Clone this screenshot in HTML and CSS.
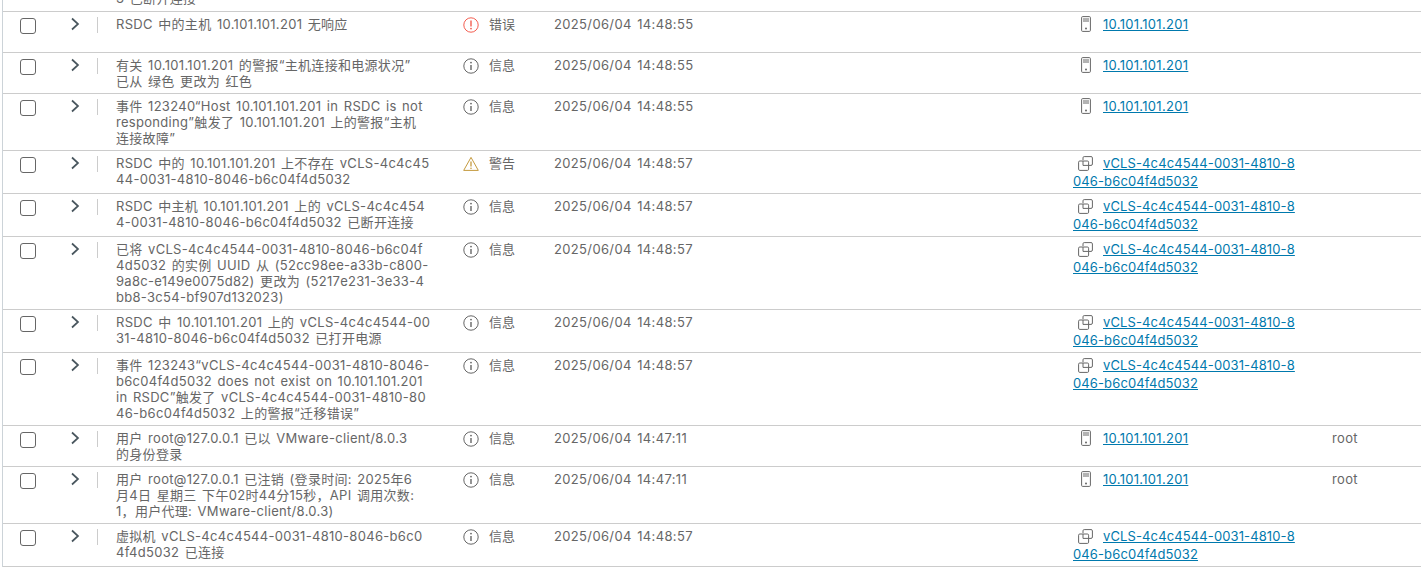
FILE: index.html
```html
<!DOCTYPE html>
<html>
<head>
    <meta charset="utf-8">
    <link rel="stylesheet" href="styles.css">
</head>
<body>
<svg class="sprites" width="0" height="0">
    <symbol id="chevron" viewBox="0 0 10 14"><path d="M2 1.5 L8 7 L2 12.5" fill="none" stroke="currentColor" stroke-width="1.7"/></symbol>
    <symbol id="error" viewBox="0 0 16 16"><circle cx="8" cy="8" r="7.2" fill="none" stroke="currentColor"/><path d="M8 3.6 V9.4" stroke="currentColor" stroke-width="1.4"/><circle cx="8" cy="11.6" r="0.9" fill="currentColor"/></symbol>
    <symbol id="info" viewBox="0 0 16 16"><circle cx="8" cy="8" r="7.2" fill="none" stroke="currentColor"/><path d="M8 7 V12" stroke="currentColor" stroke-width="1.4"/><circle cx="8" cy="4.6" r="0.9" fill="currentColor"/></symbol>
    <symbol id="warning" viewBox="0 0 16 16"><path d="M8 1.4 L15.3 14.4 H0.7 Z" fill="none" stroke="currentColor" stroke-linejoin="round"/><path d="M8 5.4 V10.4" stroke="currentColor" stroke-width="1.3"/><circle cx="8" cy="12.2" r="0.8" fill="currentColor"/></symbol>
    <symbol id="host" viewBox="0 0 10 16"><rect x="0.6" y="0.6" width="8.8" height="14.8" rx="1" fill="none" stroke="currentColor"/><path d="M2 3 H8 M2 5 H8" stroke="currentColor"/><circle cx="5" cy="12.4" r="1" fill="currentColor"/></symbol>
    <symbol id="vm" viewBox="0 0 15 15"><path d="M5 4 V1.8 Q5 .6 6.2 .6 H13 Q14.4 .6 14.4 1.8 V8 Q14.4 9.4 13 9.4 H11" fill="none" stroke="currentColor"/><rect x="0.6" y="5" width="10" height="9.4" rx="1.2" fill="none" stroke="currentColor"/><path d="M5 5 V9.4 H10.6" fill="none" stroke="currentColor"/></symbol>
</svg>

<div class="event-list">
    <div class="row row-clipped">
        <div class="cell-select"></div>
        <div class="cell-expand"></div>
        <div class="cell-desc">3 已断开连接</div>
    </div>

    <div class="row">
        <div class="cell-select"><span class="checkbox"></span></div>
        <div class="cell-expand"><svg class="chevron"><use href="#chevron"/></svg></div>
        <div class="cell-desc">RSDC 中的主机 10.101.101.201 无响应</div>
        <div class="cell-severity"><svg class="sev-icon sev-error"><use href="#error"/></svg>错误</div>
        <div class="cell-time">2025/06/04 14:48:55</div>
        <div class="cell-target"><svg class="icon-host"><use href="#host"/></svg><a href="#">10.101.101.201</a></div>
        <div class="cell-user"></div>
    </div>

    <div class="row">
        <div class="cell-select"><span class="checkbox"></span></div>
        <div class="cell-expand"><svg class="chevron"><use href="#chevron"/></svg></div>
        <div class="cell-desc">有关 10.101.101.201 的警报“主机连接和电源状况”<br>已从 绿色 更改为 红色</div>
        <div class="cell-severity"><svg class="sev-icon"><use href="#info"/></svg>信息</div>
        <div class="cell-time">2025/06/04 14:48:55</div>
        <div class="cell-target"><svg class="icon-host"><use href="#host"/></svg><a href="#">10.101.101.201</a></div>
        <div class="cell-user"></div>
    </div>

    <div class="row">
        <div class="cell-select"><span class="checkbox"></span></div>
        <div class="cell-expand"><svg class="chevron"><use href="#chevron"/></svg></div>
        <div class="cell-desc">事件 123240“Host 10.101.101.201 in RSDC is not<br>responding”触发了 10.101.101.201 上的警报“主机<br>连接故障”</div>
        <div class="cell-severity"><svg class="sev-icon"><use href="#info"/></svg>信息</div>
        <div class="cell-time">2025/06/04 14:48:55</div>
        <div class="cell-target"><svg class="icon-host"><use href="#host"/></svg><a href="#">10.101.101.201</a></div>
        <div class="cell-user"></div>
    </div>

    <div class="row">
        <div class="cell-select"><span class="checkbox"></span></div>
        <div class="cell-expand"><svg class="chevron"><use href="#chevron"/></svg></div>
        <div class="cell-desc">RSDC 中的 10.101.101.201 上不存在 vCLS-4c4c45<br>44-0031-4810-8046-b6c04f4d5032</div>
        <div class="cell-severity"><svg class="sev-icon sev-warning"><use href="#warning"/></svg>警告</div>
        <div class="cell-time">2025/06/04 14:48:57</div>
        <div class="cell-target vm-target"><svg class="icon-vm"><use href="#vm"/></svg><a href="#">vCLS-4c4c4544-0031-4810-8<br>046-b6c04f4d5032</a></div>
        <div class="cell-user"></div>
    </div>

    <div class="row">
        <div class="cell-select"><span class="checkbox"></span></div>
        <div class="cell-expand"><svg class="chevron"><use href="#chevron"/></svg></div>
        <div class="cell-desc">RSDC 中主机 10.101.101.201 上的 vCLS-4c4c454<br>4-0031-4810-8046-b6c04f4d5032 已断开连接</div>
        <div class="cell-severity"><svg class="sev-icon"><use href="#info"/></svg>信息</div>
        <div class="cell-time">2025/06/04 14:48:57</div>
        <div class="cell-target vm-target"><svg class="icon-vm"><use href="#vm"/></svg><a href="#">vCLS-4c4c4544-0031-4810-8<br>046-b6c04f4d5032</a></div>
        <div class="cell-user"></div>
    </div>

    <div class="row">
        <div class="cell-select"><span class="checkbox"></span></div>
        <div class="cell-expand"><svg class="chevron"><use href="#chevron"/></svg></div>
        <div class="cell-desc">已将 vCLS-4c4c4544-0031-4810-8046-b6c04f<br>4d5032 的实例 UUID 从 (52cc98ee-a33b-c800-<br>9a8c-e149e0075d82) 更改为 (5217e231-3e33-4<br>bb8-3c54-bf907d132023)</div>
        <div class="cell-severity"><svg class="sev-icon"><use href="#info"/></svg>信息</div>
        <div class="cell-time">2025/06/04 14:48:57</div>
        <div class="cell-target vm-target"><svg class="icon-vm"><use href="#vm"/></svg><a href="#">vCLS-4c4c4544-0031-4810-8<br>046-b6c04f4d5032</a></div>
        <div class="cell-user"></div>
    </div>

    <div class="row">
        <div class="cell-select"><span class="checkbox"></span></div>
        <div class="cell-expand"><svg class="chevron"><use href="#chevron"/></svg></div>
        <div class="cell-desc">RSDC 中 10.101.101.201 上的 vCLS-4c4c4544-00<br>31-4810-8046-b6c04f4d5032 已打开电源</div>
        <div class="cell-severity"><svg class="sev-icon"><use href="#info"/></svg>信息</div>
        <div class="cell-time">2025/06/04 14:48:57</div>
        <div class="cell-target vm-target"><svg class="icon-vm"><use href="#vm"/></svg><a href="#">vCLS-4c4c4544-0031-4810-8<br>046-b6c04f4d5032</a></div>
        <div class="cell-user"></div>
    </div>

    <div class="row">
        <div class="cell-select"><span class="checkbox"></span></div>
        <div class="cell-expand"><svg class="chevron"><use href="#chevron"/></svg></div>
        <div class="cell-desc">事件 123243“vCLS-4c4c4544-0031-4810-8046-<br>b6c04f4d5032 does not exist on 10.101.101.201<br>in RSDC”触发了 vCLS-4c4c4544-0031-4810-80<br>46-b6c04f4d5032 上的警报“迁移错误”</div>
        <div class="cell-severity"><svg class="sev-icon"><use href="#info"/></svg>信息</div>
        <div class="cell-time">2025/06/04 14:48:57</div>
        <div class="cell-target vm-target"><svg class="icon-vm"><use href="#vm"/></svg><a href="#">vCLS-4c4c4544-0031-4810-8<br>046-b6c04f4d5032</a></div>
        <div class="cell-user"></div>
    </div>

    <div class="row">
        <div class="cell-select"><span class="checkbox"></span></div>
        <div class="cell-expand"><svg class="chevron"><use href="#chevron"/></svg></div>
        <div class="cell-desc">用户 root@127.0.0.1 已以 VMware-client/8.0.3<br>的身份登录</div>
        <div class="cell-severity"><svg class="sev-icon"><use href="#info"/></svg>信息</div>
        <div class="cell-time">2025/06/04 14:47:11</div>
        <div class="cell-target"><svg class="icon-host"><use href="#host"/></svg><a href="#">10.101.101.201</a></div>
        <div class="cell-user">root</div>
    </div>

    <div class="row">
        <div class="cell-select"><span class="checkbox"></span></div>
        <div class="cell-expand"><svg class="chevron"><use href="#chevron"/></svg></div>
        <div class="cell-desc">用户 root@127.0.0.1 已注销 (登录时间: 2025年6<br>月4日 星期三 下午02时44分15秒，API 调用次数:<br>1，用户代理: VMware-client/8.0.3)</div>
        <div class="cell-severity"><svg class="sev-icon"><use href="#info"/></svg>信息</div>
        <div class="cell-time">2025/06/04 14:47:11</div>
        <div class="cell-target"><svg class="icon-host"><use href="#host"/></svg><a href="#">10.101.101.201</a></div>
        <div class="cell-user">root</div>
    </div>

    <div class="row">
        <div class="cell-select"><span class="checkbox"></span></div>
        <div class="cell-expand"><svg class="chevron"><use href="#chevron"/></svg></div>
        <div class="cell-desc">虚拟机 vCLS-4c4c4544-0031-4810-8046-b6c0<br>4f4d5032 已连接</div>
        <div class="cell-severity"><svg class="sev-icon"><use href="#info"/></svg>信息</div>
        <div class="cell-time">2025/06/04 14:48:57</div>
        <div class="cell-target vm-target"><svg class="icon-vm"><use href="#vm"/></svg><a href="#">vCLS-4c4c4544-0031-4810-8<br>046-b6c04f4d5032</a></div>
        <div class="cell-user"></div>
    </div>
</div>
</body>
</html>
```

FILE: styles.css
```css
html, body {
    margin: 0;
    height: 569px;
    overflow: hidden;
    background: #fff;
}
body {
    font-family: Inter, "Noto Sans CJK SC", sans-serif;
    font-size: 13px;
    line-height: 16px;
    letter-spacing: 0.35px;
    word-spacing: 1.5px;
    color: #666;
}
.sprites {
    display: block;
    height: 0;
}

.event-list {
    margin: -14px 0 0 2px;
    border-left: 1px solid #ccd3d8;
}
.row {
    display: grid;
    grid-template-columns: 50px 45px 357px 92px 518px 259px 1fr;
    min-height: 40px;
    border-bottom: 1px solid #ccc;
}
.row-clipped {
    min-height: 0;
    padding-bottom: 1px;
}

/* Cells */
.cell-select {
    padding: 6px 0 0 17px;
}
.checkbox {
    display: block;
    width: 14px;
    height: 14px;
    border: 1px solid #666;
    border-radius: 3px;
}
.cell-expand {
    display: flex;
    justify-content: flex-start;
    padding: 5px 0 0 17px;
    position: relative;
}
.cell-expand:empty::after {
    display: none;
}
.cell-expand::after {
    content: "";
    position: absolute;
    right: 0;
    top: 5px;
    width: 1px;
    height: 16px;
    background: #ccc;
}
.chevron {
    width: 10px;
    height: 14px;
    color: #49565e;
}
.cell-desc {
    padding: 4px 0 4px 18px;
    white-space: nowrap;
    letter-spacing: 0.3px;
}
.cell-severity {
    display: flex;
    align-items: flex-start;
    gap: 10px;
    padding: 4px 0 4px 8px;
    letter-spacing: 0;
}
.sev-icon {
    width: 16px;
    height: 16px;
    margin-top: 1px;
    color: #666;
}
.sev-error {
    color: #f35e51;
}
.sev-warning {
    color: #c49a3e;
}
.cell-time {
    padding: 4px 8px 4px 7px;
}
.cell-target {
    padding: 4px 8px;
    white-space: nowrap;
    letter-spacing: 0.3px;
}
.cell-target a {
    color: #0079ad;
}
.vm-target {
    padding: 3px 8px;
    line-height: 18px;
    letter-spacing: 0.12px;
}
.icon-host {
    width: 10px;
    height: 16px;
    margin: 0 12px 0 8px;
    vertical-align: -3px;
}
.icon-vm {
    width: 15px;
    height: 15px;
    margin: 0 10px 0 5px;
    vertical-align: -3px;
}
.icon-host, .icon-vm {
    color: #666;
}
.cell-user {
    padding: 4px 8px;
}
```
